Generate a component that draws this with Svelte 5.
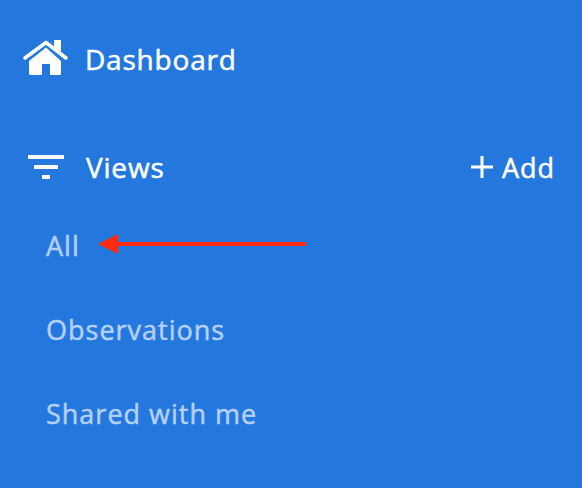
<script>
  const views = ["All", "Observations", "Shared with me"];
</script>

<nav class="sidebar">
  <a class="row dashboard" href="#dashboard">
    <svg class="home" width="46" height="38" viewBox="0 0 46 38">
      <path d="M7 21 L24 7.500 L39 21 V33.500 Q39 35 37.500 35 H28 V24 H20 V35 H8.500 Q7 35 7 33.500 Z" fill="#fff" />
      <path d="M3 18 L24 2.500 L44 18" fill="none" stroke="#fff" stroke-width="3.600" stroke-linecap="round" stroke-linejoin="round" />
      <path d="M32 0 H39 V12 L32 7 Z" fill="#fff" />
    </svg>
    <span class="heading">Dashboard</span>
  </a>

  <div class="row views-head">
    <svg class="filter" width="36" height="24" viewBox="0 0 36 24">
      <rect x="0" y="0" width="36" height="4" fill="#fff" />
      <rect x="6" y="10" width="24" height="4" fill="#fff" />
      <rect x="14" y="20" width="8" height="4" fill="#fff" />
    </svg>
    <span class="heading title">Views</span>
    <button class="add">
      <svg width="24" height="24" viewBox="0 0 24 24">
        <path d="M12 1 V23 M1 12 H23" stroke="#fff" stroke-width="3" />
      </svg>
      <span>Add</span>
    </button>
  </div>

  <ul class="list">
    {#each views as view}
      <li>{view}</li>
    {/each}
    <svg class="arrow" width="210" height="22" viewBox="0 0 210 22">
      <path d="M20 11 H208" stroke="#ff2a12" stroke-width="4" />
      <path d="M0 11 L20 1 V21 Z" fill="#ff2a12" />
    </svg>
  </ul>
</nav>

<style>
  :global(body) {
    margin: 0;
    background: #2477dd;
  }

  .sidebar {
    height: 488px;
    box-sizing: border-box;
    padding: 40px 27px 0 22px;
    background: #2477dd;
    font-family: "Open Sans", sans-serif;
    font-size: 27px;
    letter-spacing: 1px;
    -webkit-text-stroke: 0.5px currentColor;
    color: #fff;
    overflow: hidden;
  }

  .row {
    display: flex;
    align-items: center;
  }

  .heading {
    font-size: 28px;
    letter-spacing: 0.8px;
  }

  .dashboard {
    color: inherit;
    text-decoration: none;
    gap: 17px;
    height: 38px;
  }

  .views-head {
    margin-top: 70px;
    height: 38px;
    padding-left: 6px;
  }

  .title {
    margin-left: 22px;
  }

  .add {
    margin-left: auto;
    display: flex;
    align-items: center;
    gap: 8px;
    padding: 0;
    border: 0;
    background: none;
    color: inherit;
    font: inherit;
    letter-spacing: inherit;
  }

  .list {
    position: relative;
    list-style: none;
    margin: 39px 0 0;
    padding: 0 0 0 24px;
    color: #b5d0f6;
  }

  .list li {
    height: 84px;
    line-height: 42px;
  }

  .arrow {
    position: absolute;
    left: 76px;
    top: 8px;
  }
</style>
